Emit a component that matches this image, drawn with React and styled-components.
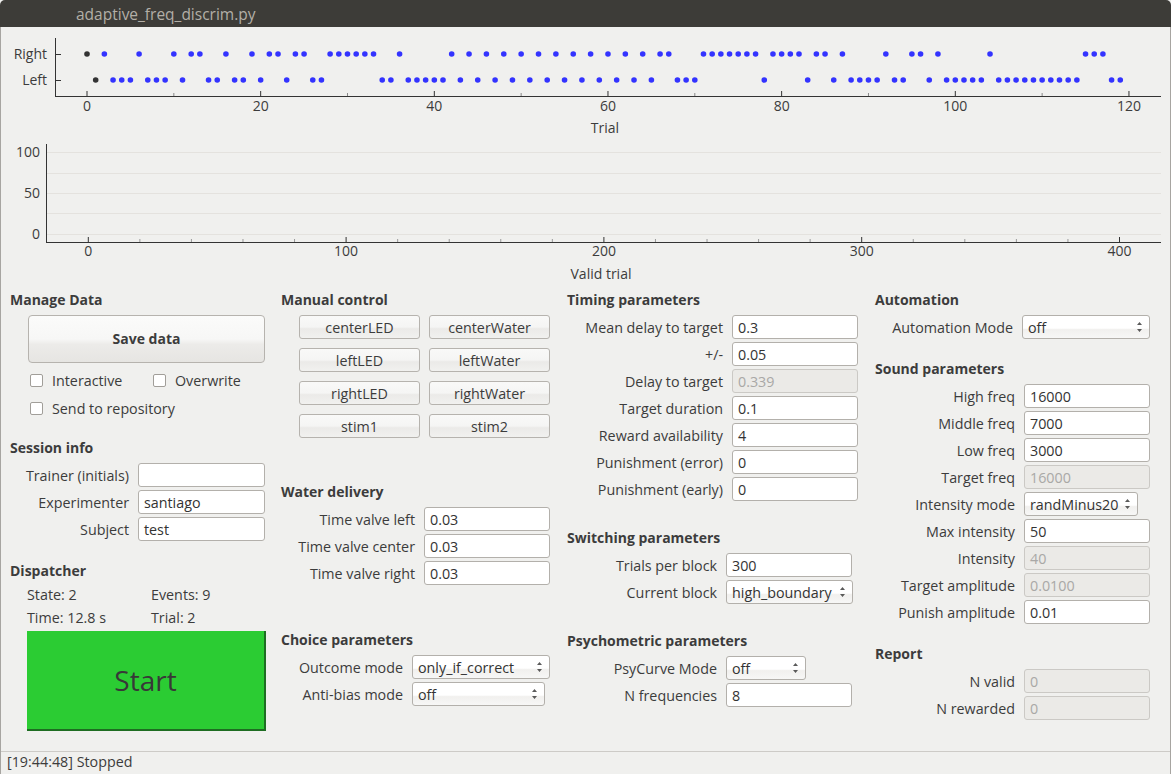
import styled, { createGlobalStyle } from 'styled-components';

const GlobalStyle = createGlobalStyle`
  html, body {
    margin: 0;
    padding: 0;
    background: #f0f0ee;
  }
  body {
    font-family: "Open Sans", "Noto Sans", sans-serif;
  }
`;

// trial outcome side, one char per trial (R = right, L = left)
const SIDES =
  'RLRLLLRLLL' + 'RLRRLLRLLR' + 'LRRLRRLLRR' + 'RRRRLLRLLL' +
  'LLRLRLRLRL' + 'RLRLRLRLRL' + 'RLRLRLRRLL' + 'LRRRRRRRLR' +
  'RRRLRRLRLL' + 'LLRLLRRLRL' + 'LLLLRLLLLL' + 'LLLLLRRRLL';

const trialX = (t) => 87 + t * 8.683;
const validX = (v) => 88.3 + v * 2.578;

const Window = styled.div`
  width: 1171px;
  height: 774px;
  display: flex;
  flex-direction: column;
  overflow: hidden;
  background: #f0f0ee;
  color: #3c3c3c;
  font-size: 14.3px;
`;

const TitleBar = styled.div`
  height: 27px;
  flex: none;
  display: flex;
  align-items: center;
  padding-left: 76px;
  background: #3d3c38;
  color: #b3afa7;
  font-size: 15.5px;
  border-radius: 5px 5px 0 0;
`;

const Body = styled.div`
  flex: 1;
  min-height: 0;
  display: flex;
  flex-direction: column;
  border-left: 1px solid #a7a5a1;
  border-right: 1px solid #a7a5a1;
`;

const Chart = styled.svg`
  display: block;
  flex: none;
  font-family: "Open Sans", "Noto Sans", sans-serif;
  font-size: 14px;
`;

const Controls = styled.div`
  flex: 1;
  display: grid;
  grid-template-columns: 271px 286px 308px 1fr;
  padding: 6px 0 0 9px;
`;

const Column = styled.div`
  display: flex;
  flex-direction: column;
  align-items: flex-start;
`;

const Heading = styled.div`
  height: 18px;
  line-height: 18px;
  font-size: 14px;
  font-weight: 700;
  margin-top: ${(p) => p.$mt || 0}px;
  margin-bottom: ${(p) => (p.$mb == null ? 6 : p.$mb)}px;
  white-space: nowrap;
`;

const SaveButton = styled.div`
  margin-left: 18px;
  width: 235px;
  height: 44px;
  padding-bottom: 2px;
  border: 1px solid #b6b3ae;
  border-radius: 4px;
  display: flex;
  align-items: center;
  justify-content: center;
  font-size: 14px;
  font-weight: 700;
  background: linear-gradient(#fbfbfa 0%, #f7f7f6 50%, #ecebe9 62%, #e6e5e2 100%);
`;

const CheckGrid = styled.div`
  margin-top: 3px;
  margin-bottom: 1px;
  padding-left: 20px;
  display: grid;
  grid-template-columns: 123px auto;
  grid-auto-rows: 28px;
  align-items: center;
`;

const CheckItem = styled.label`
  display: flex;
  align-items: center;
  gap: 9px;
  white-space: nowrap;
  grid-column: ${(p) => (p.$full ? '1 / span 2' : 'auto')};
`;

const Box = styled.span`
  width: 11px;
  height: 11px;
  border: 1px solid #a19e99;
  border-radius: 2px;
  background: #fff;
`;

const Form = styled.div`
  display: grid;
  grid-template-columns: ${(p) => p.$labelW}px auto;
  column-gap: 9px;
  row-gap: 3px;
  align-items: center;
`;

const Label = styled.div`
  justify-self: end;
  text-align: right;
  white-space: nowrap;
`;

const Field = styled.div`
  box-sizing: border-box;
  width: ${(p) => p.$w || 126}px;
  height: 24px;
  padding-left: 5px;
  display: flex;
  align-items: center;
  border: 1px solid ${(p) => (p.$disabled ? '#cbc9c5' : '#b3b0ab')};
  border-radius: 3px;
  background: ${(p) => (p.$disabled ? '#ebeae7' : '#fff')};
  color: ${(p) => (p.$disabled ? '#a9a8a6' : '#333')};
`;

const Combo = styled.div`
  box-sizing: border-box;
  width: ${(p) => p.$w || 126}px;
  height: 24px;
  padding: 0 7px 0 5px;
  display: flex;
  align-items: center;
  justify-content: space-between;
  border: 1px solid #b3b0ab;
  border-radius: 3px;
  background: linear-gradient(#ffffff 0%, #ffffff 55%, #f1f0ee 62%, #f7f7f6 100%);
  color: #333;
  white-space: nowrap;
`;

const ButtonGrid = styled.div`
  margin-left: 18px;
  display: grid;
  grid-template-columns: 121px 121px;
  grid-auto-rows: 24px;
  gap: 9px;
`;

const PushButton = styled.div`
  box-sizing: border-box;
  display: flex;
  align-items: center;
  justify-content: center;
  border: 1px solid #b6b3ae;
  border-radius: 3px;
  background: linear-gradient(#f9f9f8 0%, #f5f5f4 50%, #ebeae8 58%, #f1f1ef 100%);
  color: #3c3c3c;
`;

const InfoGrid = styled.div`
  padding-left: 17px;
  display: grid;
  grid-template-columns: 124px auto;
  grid-auto-rows: 18px;
  row-gap: 5px;
  align-items: center;
  white-space: nowrap;
`;

const StartButton = styled.div`
  margin-top: 5px;
  margin-left: 17px;
  box-sizing: border-box;
  width: 239px;
  height: 100px;
  display: flex;
  align-items: center;
  justify-content: center;
  background: #2bcc33;
  border-right: 2px solid #1e6d22;
  border-bottom: 2px solid #1e6d22;
  color: #383838;
  font-size: 28px;
`;

const StatusBar = styled.div`
  flex: none;
  box-sizing: border-box;
  height: 23px;
  padding: 0 0 3px 6px;
  border-top: 1px solid #cdcbc7;
  display: flex;
  align-items: center;
  color: #3c3c3c;
`;

function Arrows() {
  return (
    <svg width="5" height="10" viewBox="0 0 5 10">
      <path d="M2.5 0 L5 3 H0 Z M0 7 H5 L2.5 10 Z" fill="#5a5a5a" />
    </svg>
  );
}

function Select({ w, children }) {
  return (
    <Combo $w={w}>
      <span>{children}</span>
      <Arrows />
    </Combo>
  );
}

function Check({ children, full }) {
  return (
    <CheckItem $full={full}>
      <Box />
      {children}
    </CheckItem>
  );
}

function TrialChart() {
  const major = [0, 20, 40, 60, 80, 100, 120];
  const minor = [10, 30, 50, 70, 90, 110];
  return (
    <Chart width="1169" height="113" viewBox="1 27 1169 113">
      <line x1="55.5" y1="38" x2="55.5" y2="97" stroke="#333" />
      <line x1="55" y1="96.5" x2="1161" y2="96.5" stroke="#333" />
      <line x1="55" y1="54.5" x2="61" y2="54.5" stroke="#333" />
      <line x1="55" y1="80.5" x2="61" y2="80.5" stroke="#333" />
      <text x="47" y="59" textAnchor="end" fill="#3c3c3c">Right</text>
      <text x="47" y="85" textAnchor="end" fill="#3c3c3c">Left</text>
      {major.map((t) => (
        <g key={t}>
          <line x1={trialX(t)} y1="91" x2={trialX(t)} y2="96" stroke="#333" />
          <text x={trialX(t)} y="111" textAnchor="middle" fill="#3c3c3c">{t}</text>
        </g>
      ))}
      {minor.map((t) => (
        <line key={t} x1={trialX(t)} y1="93" x2={trialX(t)} y2="96" stroke="#888" />
      ))}
      {SIDES.split('').map((s, t) => (
        <circle
          key={t}
          cx={trialX(t)}
          cy={s === 'R' ? 54 : 80}
          r="2.8"
          fill={t < 2 ? '#333' : '#3333ff'}
        />
      ))}
      <text x="605" y="133" textAnchor="middle" fill="#3c3c3c">Trial</text>
    </Chart>
  );
}

function ValidChart() {
  const major = [0, 100, 200, 300, 400];
  const minor = [20, 40, 60, 80, 120, 140, 160, 180, 220, 240, 260, 280, 320, 340, 360, 380];
  const grid = [152.5, 173.5, 193.5, 213.5, 234.5];
  return (
    <Chart width="1169" height="145" viewBox="1 140 1169 145">
      {grid.map((y) => (
        <line key={y} x1="47" y1={y} x2="1161" y2={y} stroke="#e4e2de" />
      ))}
      <line x1="46.5" y1="144" x2="46.5" y2="243" stroke="#333" />
      <line x1="46" y1="242.5" x2="1161" y2="242.5" stroke="#333" />
      <text x="40" y="157" textAnchor="end" fill="#3c3c3c">100</text>
      <text x="40" y="198" textAnchor="end" fill="#3c3c3c">50</text>
      <text x="40" y="239" textAnchor="end" fill="#3c3c3c">0</text>
      {major.map((v) => (
        <g key={v}>
          <line x1={validX(v)} y1="237" x2={validX(v)} y2="242" stroke="#333" />
          <text x={validX(v)} y="256" textAnchor="middle" fill="#3c3c3c">{v}</text>
        </g>
      ))}
      {minor.map((v) => (
        <line key={v} x1={validX(v)} y1="239" x2={validX(v)} y2="242" stroke="#999" />
      ))}
      <text x="601" y="279" textAnchor="middle" fill="#3c3c3c">Valid trial</text>
    </Chart>
  );
}

export default function App() {
  return (
    <>
      <GlobalStyle />
      <Window>
        <TitleBar>adaptive_freq_discrim.py</TitleBar>
        <Body>
          <TrialChart />
          <ValidChart />
          <Controls>
            <Column>
              <Heading>Manage Data</Heading>
              <SaveButton>Save data</SaveButton>
              <CheckGrid>
                <Check>Interactive</Check>
                <Check>Overwrite</Check>
                <Check full>Send to repository</Check>
              </CheckGrid>
              <Heading $mt={16}>Session info</Heading>
              <Form $labelW={119}>
                <Label>Trainer (initials)</Label>
                <Field $w={127} />
                <Label>Experimenter</Label>
                <Field $w={127}>santiago</Field>
                <Label>Subject</Label>
                <Field $w={127}>test</Field>
              </Form>
              <Heading $mt={21} $mb={5}>Dispatcher</Heading>
              <InfoGrid>
                <span>State: 2</span>
                <span>Events: 9</span>
                <span>Time: 12.8 s</span>
                <span>Trial: 2</span>
              </InfoGrid>
              <StartButton>Start</StartButton>
            </Column>

            <Column>
              <Heading>Manual control</Heading>
              <ButtonGrid>
                <PushButton>centerLED</PushButton>
                <PushButton>centerWater</PushButton>
                <PushButton>leftLED</PushButton>
                <PushButton>leftWater</PushButton>
                <PushButton>rightLED</PushButton>
                <PushButton>rightWater</PushButton>
                <PushButton>stim1</PushButton>
                <PushButton>stim2</PushButton>
              </ButtonGrid>
              <Heading $mt={45}>Water delivery</Heading>
              <Form $labelW={134}>
                <Label>Time valve left</Label>
                <Field>0.03</Field>
                <Label>Time valve center</Label>
                <Field>0.03</Field>
                <Label>Time valve right</Label>
                <Field>0.03</Field>
              </Form>
              <Heading $mt={46}>Choice parameters</Heading>
              <Form $labelW={122}>
                <Label>Outcome mode</Label>
                <Select w={138}>only_if_correct</Select>
                <Label>Anti-bias mode</Label>
                <Select w={133}>off</Select>
              </Form>
            </Column>

            <Column>
              <Heading>Timing parameters</Heading>
              <Form $labelW={156}>
                <Label>Mean delay to target</Label>
                <Field>0.3</Field>
                <Label>+/-</Label>
                <Field>0.05</Field>
                <Label>Delay to target</Label>
                <Field $disabled>0.339</Field>
                <Label>Target duration</Label>
                <Field>0.1</Field>
                <Label>Reward availability</Label>
                <Field>4</Field>
                <Label>Punishment (error)</Label>
                <Field>0</Field>
                <Label>Punishment (early)</Label>
                <Field>0</Field>
              </Form>
              <Heading $mt={28}>Switching parameters</Heading>
              <Form $labelW={150}>
                <Label>Trials per block</Label>
                <Field>300</Field>
                <Label>Current block</Label>
                <Select w={127}>high_boundary</Select>
              </Form>
              <Heading $mt={28}>Psychometric parameters</Heading>
              <Form $labelW={150}>
                <Label>PsyCurve Mode</Label>
                <Select w={80}>off</Select>
                <Label>N frequencies</Label>
                <Field>8</Field>
              </Form>
            </Column>

            <Column>
              <Heading>Automation</Heading>
              <Form $labelW={138}>
                <Label>Automation Mode</Label>
                <Select w={128}>off</Select>
              </Form>
              <Heading $mt={21}>Sound parameters</Heading>
              <Form $labelW={140}>
                <Label>High freq</Label>
                <Field>16000</Field>
                <Label>Middle freq</Label>
                <Field>7000</Field>
                <Label>Low freq</Label>
                <Field>3000</Field>
                <Label>Target freq</Label>
                <Field $disabled>16000</Field>
                <Label>Intensity mode</Label>
                <Select w={114}>randMinus20</Select>
                <Label>Max intensity</Label>
                <Field>50</Field>
                <Label>Intensity</Label>
                <Field $disabled>40</Field>
                <Label>Target amplitude</Label>
                <Field $disabled>0.0100</Field>
                <Label>Punish amplitude</Label>
                <Field>0.01</Field>
              </Form>
              <Heading $mt={21}>Report</Heading>
              <Form $labelW={140}>
                <Label>N valid</Label>
                <Field $disabled>0</Field>
                <Label>N rewarded</Label>
                <Field $disabled>0</Field>
              </Form>
            </Column>
          </Controls>
          <StatusBar>[19:44:48] Stopped</StatusBar>
        </Body>
      </Window>
    </>
  );
}
